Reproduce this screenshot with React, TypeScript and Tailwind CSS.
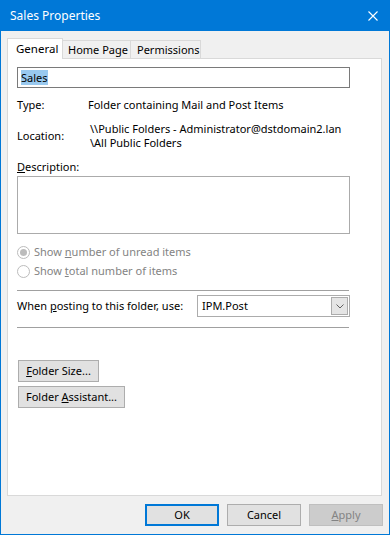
import React from 'react'

const font = { fontFamily: '"Noto Sans", "Segoe UI", sans-serif' }

function Btn({ children, className = '' }: { children: React.ReactNode; className?: string }) {
  return (
    <div className={`flex items-center justify-center h-[22px] border border-[#adadad] bg-[#e1e1e1] text-black ${className}`}>
      {children}
    </div>
  )
}

function Radio({ checked, children }: { checked?: boolean; children: React.ReactNode }) {
  return (
    <div className="flex items-center h-[16px] gap-[4px] text-[#838383]">
      <span className="w-[13px] h-[13px] rounded-full border border-[#bcbcbc] bg-white flex items-center justify-center">
        {checked && <span className="w-[7px] h-[7px] rounded-full bg-[#bcbcbc]" />}
      </span>
      <span>{children}</span>
    </div>
  )
}

export default function App() {
  return (
    <div className="w-[390px] h-[535px] flex flex-col bg-[#f0f0f0] border border-t-0 border-[#0078d7] text-[11px] leading-[16px] text-black whitespace-nowrap" style={font}>
      {/* title bar */}
      <div className="h-[31px] bg-[#0078d7] flex items-center justify-between pl-[9px] pr-[10px] text-white">
        <span className="text-[12px]">Sales Properties</span>
        <svg width="10" height="10" viewBox="0 0 10 10" className="mr-[1px]">
          <path d="M0.5 0.5 L9.5 9.5 M9.5 0.5 L0.5 9.5" stroke="white" strokeWidth="1.1" />
        </svg>
      </div>

      <div className="flex-1 flex flex-col pl-[6px] pr-[7px] pt-[7px]">
        {/* tabs */}
        <div className="flex items-end h-[21px] relative z-10">
          <div className="h-[21px] w-[56px] bg-white border border-b-0 border-[#d9d9d9] pl-[8px] pt-[2px] text-[11.5px]">General</div>
          <div className="h-[18px] w-[68px] bg-[#f0f0f0] border border-l-0 border-b-0 border-[#d9d9d9] pl-[5px] mb-[1px] leading-[17px]">Home Page</div>
          <div className="h-[18px] w-[70px] bg-[#f0f0f0] border border-l-0 border-b-0 border-[#d9d9d9] pl-[6px] mb-[1px] leading-[17px]">Permissions</div>
        </div>

        {/* panel */}
        <div className="flex-1 -mt-[1px] bg-white border border-[#d9d9d9] pl-[9px] pt-[8px] flex flex-col">
          <div className="w-[333px] h-[21px] border border-[#7a7a7a] flex items-center pl-[3px]">
            <span className="bg-[#99c9ef] leading-[15px]">Sales</span>
          </div>

          <div className="flex mt-[9px]">
            <span className="w-[71px]">Type:</span>
            <span>Folder containing Mail and Post Items</span>
          </div>

          <div className="flex items-center mt-[9px]">
            <span className="w-[73px]">Location:</span>
            <div className="leading-[14px]">
              <div>\\Public Folders - Administrator@dstdomain2.lan</div>
              <div>\All Public Folders</div>
            </div>
          </div>

          <div className="mt-[9px]">
            <span className="underline">D</span>escription:
          </div>
          <div className="w-[333px] h-[58px] mt-[1px] border border-[#ababab]" />

          <div className="mt-[10px] flex flex-col gap-[3px]">
            <Radio checked>
              Show <span className="underline">n</span>umber of unread items
            </Radio>
            <Radio>
              Show <span className="underline">t</span>otal number of items
            </Radio>
          </div>

          <div className="w-[332px] h-px bg-[#a0a0a0] mt-[11px]" />

          <div className="flex items-center mt-[4px] w-[333px] justify-between">
            <span>
              When <span className="underline">p</span>osting to this folder, use:
            </span>
            <div className="w-[153px] h-[22px] border border-[#acacac] flex items-center justify-between pl-[4px] pr-[1px]">
              <span>IPM.Post</span>
              <div className="w-[17px] h-[18px] bg-[#e5e5e5] border border-[#acacac] flex items-center justify-center">
                <svg width="8" height="5" viewBox="0 0 8 5">
                  <path d="M0.5 0.5 L4 4 L7.5 0.5" fill="none" stroke="#606060" strokeWidth="1" />
                </svg>
              </div>
            </div>
          </div>

          <div className="w-[332px] h-px bg-[#a0a0a0] mt-[10px]" />

          <Btn className="w-[81px] mt-[32px] ml-[1px]">
            <span><span className="underline">F</span>older Size...</span>
          </Btn>
          <Btn className="w-[107px] mt-[4px] ml-[1px]">
            <span>Folder <span className="underline">A</span>ssistant...</span>
          </Btn>
        </div>

        {/* bottom buttons */}
        <div className="flex justify-end gap-[8px] mt-[8px] mb-[8px] -mr-[1px]">
          <div className="flex items-center justify-center w-[74px] h-[22px] border-2 border-[#0078d7] bg-[#e1e1e1]">OK</div>
          <Btn className="w-[74px]">Cancel</Btn>
          <div className="flex items-center justify-center w-[74px] h-[22px] border border-[#bfbfbf] bg-[#cccccc] text-[#838383]">
            <span><span className="underline">A</span>pply</span>
          </div>
        </div>
      </div>
    </div>
  )
}
